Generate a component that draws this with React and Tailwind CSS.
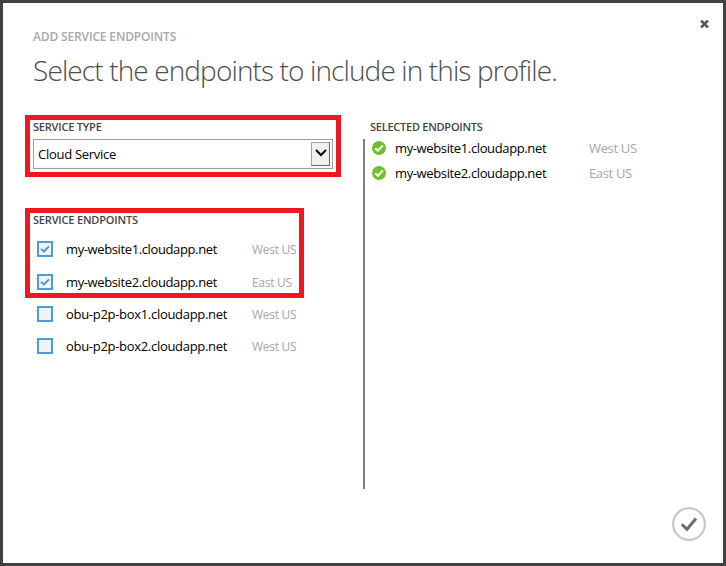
import React from "react";

function CheckBox({ checked }) {
  return (
    <span className="flex h-4 w-4 shrink-0 items-center justify-center border-2 border-[#4a9fd0] bg-[#f2f2f2]">
      {checked && (
        <svg width="10" height="8" viewBox="0 0 10 8" fill="none" stroke="#3c98cc" strokeWidth="1.8">
          <path d="M1 3.8 3.9 6.5 9 1.3" />
        </svg>
      )}
    </span>
  );
}

function EndpointRow({ name, region, checked, className, nameClass }) {
  return (
    <div className={`flex items-center ${className}`}>
      <CheckBox checked={checked} />
      <span className="ml-[13px] w-[186px] shrink-0 whitespace-nowrap pt-0.5 text-[13px] text-black">
        <span className={nameClass}>{name}</span>
      </span>
      <span className="whitespace-nowrap pt-0.5 text-[12px] tracking-[-0.3px] text-[#a6a6a6]">{region}</span>
    </div>
  );
}

function SelectedRow({ name, region }) {
  return (
    <div className="flex h-[25px] items-center">
      <svg width="14" height="14" viewBox="0 0 14 14" className="-mt-0.5 shrink-0">
        <circle cx="7" cy="7" r="7" fill="#70bf2b" />
        <path d="M3.2 7.2 6 9.8 10.8 4.4" fill="none" stroke="#fff" strokeWidth="2.1" />
      </svg>
      <span className="ml-[9px] w-[194px] shrink-0 whitespace-nowrap text-[13px] tracking-[-0.37px] text-black">{name}</span>
      <span className="whitespace-nowrap text-[13px] tracking-[-0.35px] text-[#a6a6a6]">{region}</span>
    </div>
  );
}

export default function App() {
  return (
    <div className="flex h-[566px] w-[726px] flex-col border-[3px] border-[#414141] bg-white font-['Open_Sans','Noto_Sans',sans-serif]">
      <header className="flex h-[112px] justify-between pl-[30px] pr-[14px]">
        <div className="pt-6">
          <p className="h-5 whitespace-nowrap text-[12px] leading-5 font-semibold tracking-[-0.15px] text-[#a8a8a8]">ADD SERVICE ENDPOINTS</p>
          <h1 className="mt-[3px] h-10 whitespace-nowrap text-[28px] leading-10 font-light tracking-[-0.88px] text-[#4d4d4d]">
            Select the endpoints to include in this profile.
          </h1>
        </div>
        <button aria-label="Close" className="mt-[17px] h-2 w-[9px]">
          <svg width="9" height="8" viewBox="0 0 9 8" fill="none" stroke="#585858" strokeWidth="2.5">
            <path d="M1 .5 8 7.5M8 .5 1 7.5" />
          </svg>
        </button>
      </header>

      <main className="flex h-[374px] pl-[22px]">
        <section className="w-[338px] shrink-0">
          <div className="h-[62px] w-[316px] border-[5px] border-[#ee1822] pl-[3px]">
            <h2 className="h-[19px] whitespace-nowrap pt-px text-[11px] leading-3 font-semibold tracking-[-0.2px] text-[#444]">SERVICE TYPE</h2>
            <div className="flex h-[30px] w-[300px] items-center justify-between border border-[#a0a0a0] bg-white pr-[2px] pl-1">
              <span className="pt-0.5 text-[13px] tracking-[-0.28px] text-black">Cloud Service</span>
              <span className="flex h-6 w-[19px] items-center justify-center border border-t-[#a0a0a0] border-r-[#696969] border-b-[#696969] border-l-[#a0a0a0] bg-[#f0f0f0]">
                <svg width="12" height="8" viewBox="0 0 12 8" fill="none" stroke="#000" strokeWidth="2" className="-mt-0.5">
                  <path d="M1 1 6 6 11 1" />
                </svg>
              </span>
            </div>
          </div>

          <div className="mt-[31px] h-[90px] w-[279px] border-[5px] border-[#ee1822] pl-[3px]">
            <h2 className="h-[19px] whitespace-nowrap pt-px text-[11px] leading-3 font-semibold tracking-[-0.18px] text-[#444]">SERVICE ENDPOINTS</h2>
            <div className="pl-1">
              <EndpointRow name="my-website1.cloudapp.net" region="West US" checked className="h-[34px]" nameClass="tracking-[-0.38px]" />
              <EndpointRow name="my-website2.cloudapp.net" region="East US" checked className="-mt-px h-[34px]" nameClass="tracking-[-0.38px]" />
            </div>
          </div>
          <div className="pl-3">
            <EndpointRow name="obu-p2p-box1.cloudapp.net" region="West US" className="h-8" nameClass="tracking-[-0.3px]" />
            <EndpointRow name="obu-p2p-box2.cloudapp.net" region="West US" className="h-8" nameClass="tracking-[-0.3px]" />
          </div>
        </section>

        <section className="flex w-[340px] flex-col">
          <h2 className="h-6 shrink-0 whitespace-nowrap pt-[6px] pl-[7px] text-[11px] leading-3 font-semibold tracking-[-0.25px] text-[#444]">SELECTED ENDPOINTS</h2>
          <div className="flex h-[350px] shrink-0 flex-col border-l-2 border-[#80817b] pl-[7px]">
            <div className="-mt-[3px]">
              <SelectedRow name="my-website1.cloudapp.net" region="West US" />
              <SelectedRow name="my-website2.cloudapp.net" region="East US" />
            </div>
          </div>
        </section>
      </main>

      <footer className="flex justify-end pt-[18px] pr-[17px]">
        <button aria-label="Confirm">
          <svg width="34" height="34" viewBox="0 0 34 34" fill="none">
            <circle cx="17" cy="17" r="15.9" stroke="#c8c8c8" strokeWidth="2.2" />
            <path d="M9.8 17.2 15 22.3 24 11.5" stroke="#6c6c6c" strokeWidth="3" />
          </svg>
        </button>
      </footer>
    </div>
  );
}
